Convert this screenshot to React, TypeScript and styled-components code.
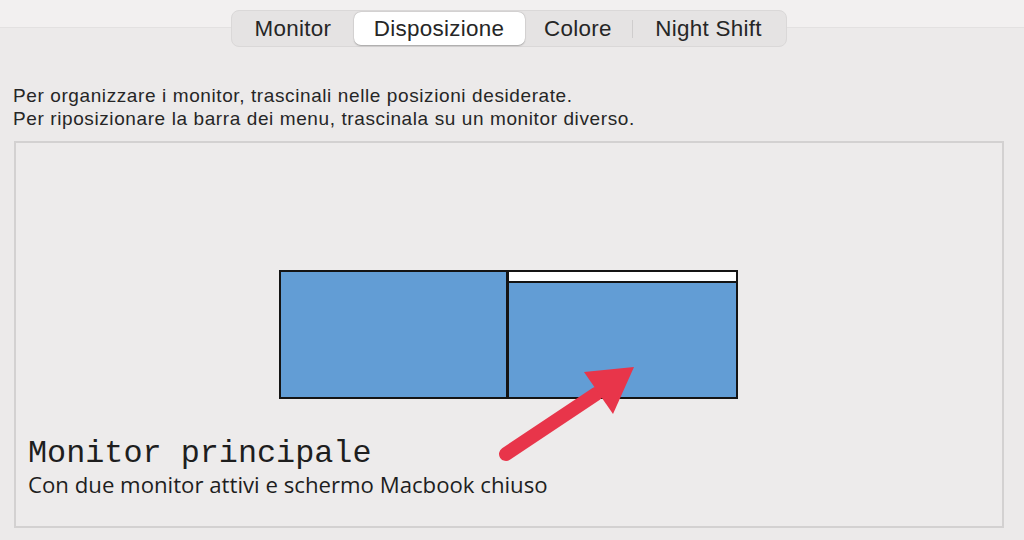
import React from "react";
import styled, { createGlobalStyle } from "styled-components";

const GlobalStyle = createGlobalStyle`
  html, body {
    margin: 0;
    padding: 0;
    background: #ECEAEA;
    font-family: "Liberation Sans", Arial, sans-serif;
    color: #262626;
  }
  * { box-sizing: border-box; }
`;

const Page = styled.div`
  width: 1024px;
  height: 540px;
  overflow: hidden;
  display: flex;
  flex-direction: column;
`;

const Header = styled.div`
  display: flex;
  justify-content: center;
  padding: 10px 7px 0 0;
  background: linear-gradient(
    to bottom,
    #F2F0F0 0,
    #F2F0F0 27px,
    #E3E1E1 27px,
    #E3E1E1 28px,
    #ECEAEA 28px
  );
`;

const Segmented = styled.div`
  display: flex;
  align-items: center;
  height: 37px;
  padding: 1px;
  border: 1px solid #DAD8D8;
  border-radius: 8px;
  background: #E5E3E3;
`;

const Tab = styled.div<{ $active?: boolean; $w: number }>`
  width: ${(p) => p.$w}px;
  height: 33px;
  display: flex;
  align-items: center;
  justify-content: center;
  font-size: 22.4px;
  letter-spacing: 0.3px;
  color: #262626;
  border-radius: 7px;
  background: ${(p) => (p.$active ? "#FFFFFF" : "transparent")};
  box-shadow: ${(p) =>
    p.$active ? "0 0.5px 1.5px rgba(0,0,0,0.25), 0 0 0 0.5px rgba(0,0,0,0.06)" : "none"};
`;

const Separator = styled.div`
  width: 1px;
  height: 18px;
  background: #CFCDCD;
`;

const Content = styled.div`
  display: flex;
  flex-direction: column;
  padding: 37px 20px 0 14px;
`;

const Description = styled.p`
  margin: 0 0 11px -1px;
  font-size: 19px;
  letter-spacing: 0.6px;
  line-height: 23px;
  color: #262626;
`;

const Panel = styled.div`
  position: relative;
  width: 990px;
  height: 387px;
  border: 2px solid #D3D1D1;
  background: #EDEBEB;
  display: flex;
  flex-direction: column;
`;

const Arrangement = styled.div`
  display: flex;
  justify-content: center;
  margin-top: 127px;
  padding-right: 1px;
`;

const Screen = styled.div<{ $w: number; $joined?: boolean }>`
  width: ${(p) => p.$w}px;
  height: 129px;
  background: #629DD5;
  border: 2px solid #141414;
  border-left-width: ${(p) => (p.$joined ? "1px" : "2px")};
  display: flex;
  flex-direction: column;
`;

const MenuBar = styled.div`
  height: 11px;
  background: #FFFFFF;
  border-bottom: 2px solid #141414;
`;

const Caption = styled.div`
  display: flex;
  flex-direction: column;
  margin: 38px 0 0 12px;
`;

const CaptionTitle = styled.div`
  font-family: "Liberation Mono", "DejaVu Sans Mono", monospace;
  font-size: 31.8px;
  line-height: 34px;
  color: #1E1E1E;
`;

const CaptionText = styled.div`
  font-family: "Open Sans", "Noto Sans", sans-serif;
  font-size: 22.2px;
  line-height: 28px;
  color: #1E1E1E;
`;

const ArrowLayer = styled.svg`
  position: absolute;
  left: 0;
  top: 0;
  width: 100%;
  height: 100%;
  pointer-events: none;
`;

export default function App() {
  return (
    <>
      <GlobalStyle />
      <Page>
        <Header>
          <Segmented>
            <Tab $w={121}>Monitor</Tab>
            <Tab $w={171} $active>
              Disposizione
            </Tab>
            <Tab $w={107}>Colore</Tab>
            <Separator />
            <Tab $w={152}>Night Shift</Tab>
          </Segmented>
        </Header>
        <Content>
          <Description>
            Per organizzare i monitor, trascinali nelle posizioni desiderate.
            <br />
            Per riposizionare la barra dei menu, trascinala su un monitor diverso.
          </Description>
          <Panel>
            <Arrangement>
              <Screen $w={229} />
              <Screen $w={230} $joined>
                <MenuBar />
              </Screen>
            </Arrangement>
            <Caption>
              <CaptionTitle>Monitor principale</CaptionTitle>
              <CaptionText>Con due monitor attivi e schermo Macbook chiuso</CaptionText>
            </Caption>
            <ArrowLayer viewBox="0 0 986 383">
              <line
                x1="490"
                y1="311"
                x2="580"
                y2="251"
                stroke="#E8354A"
                strokeWidth="14"
                strokeLinecap="round"
              />
              <polygon points="618,224 568,229 597,271" fill="#E8354A" />
            </ArrowLayer>
          </Panel>
        </Content>
      </Page>
    </>
  );
}
